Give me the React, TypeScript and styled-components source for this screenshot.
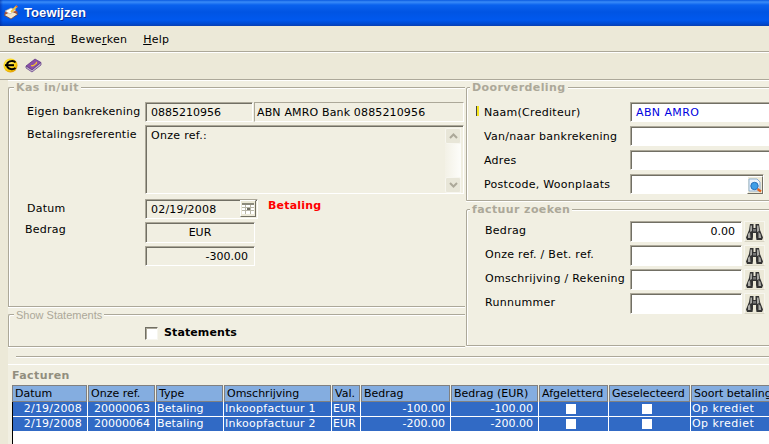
import React from "react";
import styled, { createGlobalStyle } from "styled-components";

const Global = createGlobalStyle`
  html, body { margin: 0; padding: 0; background: #f1efe2; }
  #root { width: 769px; height: 444px; overflow: hidden; }
`;

const Win = styled.div`
  width: 769px; height: 444px; overflow: hidden; display: flex; flex-direction: column;
  background: #ece9d8; color: #000;
  font: 11px/14px "DejaVu Sans", Verdana, sans-serif;
`;
const TitleBar = styled.div`
  height: 26px; flex: none; display: flex; align-items: center; gap: 5px; padding: 0 0 1px 3px; box-sizing: border-box;
  background: linear-gradient(90deg, rgba(0, 30, 140, .45) 0, rgba(0, 30, 140, 0) 3px),
    linear-gradient(180deg, #0a5ae0 0, #3a8cf8 2px, #0a62ee 5px, #0054e3 12px, #0058ee 20px, #0049cf 24px, #0a3fb0 26px);
`;
const TitleText = styled.span`
  color: #fff; font: bold 13px/16px "Liberation Sans", Arial, sans-serif; letter-spacing: 0.1px; text-shadow: 1px 1px 0 #0a2f9a;
`;
const MenuBar = styled.nav`
  height: 26px; flex: none; box-sizing: border-box; display: flex; align-items: center; gap: 16px; padding: 2px 0 0 8px;
  border-bottom: 1px solid #aca899; box-shadow: 0 1px 0 #fff;
`;
const MenuItem = styled.span`
  letter-spacing: 0.25px;
`;
const ToolBar = styled.div`
  height: 28px; flex: none; box-sizing: border-box; display: flex; gap: 7px; padding: 6px 0 0 3px;
  border-bottom: 1px solid #aca899;
`;
const Body = styled.div`
  flex: 1; min-height: 0; margin-left: 8px; background: #f1efe2; display: flex; flex-direction: column;
  box-shadow: inset 0 1px 0 #fff;
`;
const Upper = styled.div`
  display: flex; padding-top: 7px; flex: none;
`;
const LeftCol = styled.div`
  width: 458px; flex: none; display: flex; flex-direction: column; gap: 7px;
`;
const RightCol = styled.div`
  width: 320px; flex: none; display: flex; flex-direction: column; gap: 8px;
`;
const Panel = styled.section<{ $h: number; $open?: boolean }>`
  position: relative; box-sizing: border-box; height: ${p => p.$h}px;
  border: 1px solid #aca899; border-radius: 2px 0 0 0;
  ${p => p.$open ? "border-right: 0; margin-right: 1px;" : ""}
  box-shadow: inset 1px 1px 0 #fff, 0 1px 0 #fff;
`;
const Legend = styled.span<{ $plain?: boolean; $left?: number }>`
  position: absolute; left: ${p => p.$left ?? 5}px; top: -7px; padding: 0 2px; background: #f1efe2; color: #aca899;
  font: ${p => p.$plain ? `11px/14px "Liberation Sans", Arial, sans-serif` : `bold 11px/14px "DejaVu Sans", Verdana, sans-serif`};
  letter-spacing: ${p => p.$plain ? "0" : "0.4px"};
`;
const KasBody = styled.div`
  padding: 14px 0 0 18px; display: flex; flex-direction: column;
`;
const KasRow = styled.div<{ $top?: number }>`
  display: flex; align-items: flex-start; margin-top: ${p => p.$top ?? 0}px;
`;
const KasLabel = styled.label<{ $shift?: number; $down?: number }>`
  width: ${p => 118 - (p.$shift ?? 0)}px; flex: none; margin-left: ${p => p.$shift ?? 0}px; padding-top: ${p => p.$down ?? 3}px;
  box-sizing: border-box; white-space: nowrap; letter-spacing: 0.25px;
`;
const Field = styled.div<{ $w: number; $h?: number; $align?: string; $light?: boolean; $white?: boolean; $blue?: boolean; $gap?: number }>`
  box-sizing: border-box; flex: none; width: ${p => p.$w}px; height: ${p => p.$h ?? 20}px;
  margin-left: ${p => p.$gap ?? 0}px;
  border: 1px solid; border-color: #aca899 #fff #fff #aca899;
  box-shadow: ${p => p.$light ? "none" : "inset 1px 1px 0 #716f64"};
  background: ${p => p.$white ? "#fff" : "transparent"};
  color: ${p => p.$blue ? "#0000e0" : "#000"};
  letter-spacing: ${p => p.$blue ? "0.4px" : "0"};
  padding: 3px ${p => p.$align === "right" ? "6px" : "5px"} 0 ${p => p.$light ? "2px" : "5px"};
  text-align: ${p => p.$align ?? "left"}; white-space: nowrap;
`;
const WideText = styled.span`
  letter-spacing: 0.15px;
`;
const MemoText = styled.span`
  letter-spacing: 0.3px;
`;
const MemoField = styled(Field)`
  display: flex; justify-content: space-between; padding-right: 2px;
`;
const Scroll = styled.div`
  width: 16px; height: 65px; flex: none; margin-top: -1px; display: flex; flex-direction: column; justify-content: space-between;
  background: linear-gradient(90deg, #f3f1e6, #fdfdfa);
`;
const ScrollBtn = styled.div`
  height: 16px; display: flex; align-items: center; justify-content: center; box-sizing: border-box;
  background: #e8e6d8; border: 1px solid #f7f6ef; border-radius: 2px;
`;
const InlineBtn = styled.div`
  width: 16px; height: 17px; box-sizing: border-box; background: #ece9d8; display: flex; align-items: center; justify-content: center;
  border: 1px solid; border-color: #fff #716f64 #716f64 #fff;
`;
const DateField = styled(Field)`
  display: flex; justify-content: space-between; align-items: flex-start; padding-right: 1px; padding-top: 0;
`;
const DateText = styled.span`
  padding-top: 3px; letter-spacing: 0.2px;
`;
const Status = styled.span`
  color: #f00; font-weight: bold; margin-left: 10px; padding-top: 0; letter-spacing: 0.2px;
`;
const CheckRow = styled.div`
  display: flex; align-items: center; padding: 11px 0 0 136px; gap: 6px;
`;
const Check = styled.span`
  width: 13px; height: 13px; box-sizing: border-box; background: #fff; display: block;
  border: 1px solid; border-color: #716f64 #f7f6ef #f7f6ef #716f64; box-shadow: inset 1px 1px 0 #aca899;
`;
const Strong = styled.span`
  font-weight: bold; letter-spacing: 0.1px;
`;
const FormStack = styled.div<{ $top: number; $gap: number }>`
  padding-top: ${p => p.$top}px; display: flex; flex-direction: column; gap: ${p => p.$gap}px;
`;
const FormRow = styled.div`
  display: flex; align-items: flex-start;
`;
const MarkerSlot = styled.div<{ $w?: number }>`
  width: ${p => p.$w ?? 17}px; flex: none; padding-left: 9px; box-sizing: border-box;
`;
const Marker = styled.i`
  display: block; width: 2px; height: 10px; margin-top: 4px; background: #f5e51b; border-left: 1px solid #444;
`;
const RLabel = styled.label<{ $w: number; $down?: number }>`
  width: ${p => p.$w}px; flex: none; padding-top: ${p => p.$down ?? 3}px; white-space: nowrap; letter-spacing: 0.28px;
`;
const LookupField = styled(Field)`
  display: flex; justify-content: flex-end; padding: 1px 0 0 0;
`;
const GlassBtn = styled(InlineBtn)`
  width: 16px; height: 18px; background: #ece9d8;
`;
const FindBtn = styled.div`
  width: 21px; height: 21px; margin-left: 2px; flex: none; box-sizing: border-box; display: flex; align-items: center; justify-content: center;
  background: #ece9d8; border: 1px solid; border-color: #f7f6ef #f7f6ef #d8d5c4 #f7f6ef;
`;
const Divider = styled.hr`
  margin: 9px 0 0 8px; border: 0; height: 1px; background: #aca899; box-shadow: 0 1px 0 #fff; flex: none;
`;
const Section = styled.div`
  margin-top: 7px; border-top: 1px solid #fff; flex: 1; min-height: 0; padding: 3px 0 0 4px; display: flex; flex-direction: column;
`;
const SectionTitle = styled.div`
  color: #918e7e; font-weight: bold; height: 17px; padding-top: 1px; box-sizing: border-box; letter-spacing: 0.4px; flex: none;
`;
const HeadCols = "75px 67px 67px 107px 28px 89px 87px 69px 81px 100px";
const RowCols = "74px 67px 67px 107px 28px 89px 87px 69px 81px 100px";
const Head = styled.div`
  display: grid; grid-template-columns: ${HeadCols}; gap: 1px; height: 17px; flex: none;
`;
const HeadCell = styled.div`
  box-sizing: border-box; background: #84ade0; border: 1px solid #808080; padding: 1px 2px; white-space: nowrap; overflow: hidden;
  line-height: 14px;
`;
const Rows = styled.div`
  flex: 1; background: #fff; border-left: 1px solid #000; display: flex; flex-direction: column; gap: 1px;
`;
const DataRow = styled.div`
  display: grid; grid-template-columns: ${RowCols}; gap: 1px; height: 14px; flex: none;
`;
const Cell = styled.div<{ $align?: string; $track?: number }>`
  background: #316ac5; color: #fff; padding: 0 ${p => p.$align === "right" ? "5px" : "1px"} 0 1px;
  line-height: 14px; white-space: nowrap; overflow: hidden; display: flex; letter-spacing: ${p => p.$track ?? 0}px;
  justify-content: ${p => p.$align === "right" ? "flex-end" : "flex-start"};
`;
const TickCell = styled.div`
  background: #316ac5; display: flex; align-items: center; justify-content: center; padding-right: 5px;
`;
const Tick = styled.span`
  width: 10px; height: 10px; background: #fff; display: block;
`;

const AppIcon = () => (
  <svg width="16" height="16" viewBox="0 0 16 16">
    <path d="M1 8l7-4 7 3-7 5z" fill="#c9502a" />
    <path d="M1 10l7-4 7 3-7 5z" fill="#f3e7d0" stroke="#7a3a20" strokeWidth=".7" />
    <path d="M2 6l6-3 5 2-6 4z" fill="#fff" stroke="#a9a090" strokeWidth=".6" />
    <path d="M8 7l6-6" stroke="#f0c040" strokeWidth="2" />
    <path d="M13 1l1.5 1" stroke="#e05030" strokeWidth="1.4" />
  </svg>
);
const EuroIcon = () => (
  <svg width="15" height="15" viewBox="0 0 15 15">
    <defs>
      <radialGradient id="eu" cx=".4" cy=".35" r=".75">
        <stop offset="0" stopColor="#fff27a" />
        <stop offset=".6" stopColor="#fbd20c" />
        <stop offset="1" stopColor="#d98a00" />
      </radialGradient>
    </defs>
    <circle cx="7.5" cy="7.5" r="7" fill="url(#eu)" />
    <path d="M12.5 4.500C11 2.400 5.500 2.600 4.300 5.500c-1 2.400.2 5.200 3.500 5.600 2 .2 3.800-.3 4.700-1.300" fill="none" stroke="#000" strokeWidth="2" />
    <path d="M2 7.200h9" stroke="#000" strokeWidth="2" />
  </svg>
);
const BookIcon = () => (
  <svg width="17" height="15" viewBox="0 0 17 15">
    <path d="M1 8L10 1l6 3.5L7 12z" fill="#8a4fa8" stroke="#5a3080" strokeWidth=".7" />
    <path d="M1 8l6 4 9-7.500V7l-9 7-6-4z" fill="#c9bcd2" stroke="#5a3080" strokeWidth=".7" />
    <path d="M6 7.500c2 1 3-.5 4.500-1.500 1-.6 1.500-1.500.5-2" fill="none" stroke="#f0c030" strokeWidth="1.300" />
  </svg>
);
const Chevron = ({ up }: { up?: boolean }) => (
  <svg width="9" height="6" viewBox="0 0 9 6">
    <path d={up ? "M1 5l3.500-3.500L8 5" : "M1 1l3.500 3.500L8 1"} fill="none" stroke="#aca899" strokeWidth="2" />
  </svg>
);
const CalIcon = () => (
  <svg width="12" height="11" viewBox="0 0 12 11">
    <rect width="12" height="11" fill="#fff" />
    <rect width="12" height="2" fill="#8c8a7c" />
    <path d="M0 4.500h12M0 7.500h12M3.500 2v9M8.500 2v9" stroke="#b8b6a8" strokeWidth="1" />
    <rect x="5" y="5" width="3" height="2" fill="#716f64" />
  </svg>
);
const GlassIcon = () => (
  <svg width="14" height="15" viewBox="0 0 14 15">
    <path d="M1 1h8l3 3v9H1z" fill="#eef4fb" stroke="#8fb0d0" />
    <circle cx="6.500" cy="8" r="3.700" fill="#3f9fe8" stroke="#2a70b8" />
    <path d="M9.500 11l3.500 2.500" stroke="#e8641c" strokeWidth="2.200" />
  </svg>
);
const BinocIcon = () => (
  <svg width="17" height="16" viewBox="0 0 17 16">
    <path d="M4 0h3.500v4h2V0H13l1 6 3 7.500-1 2.500h-5.500L10 13V9H7v4l-.5 3H1l-1-2.500L3 6z" fill="#333" />
    <path d="M4.500 1.500H6v5.500l-2 1zM11 1.500h1.500l.8 5.500-2.300 1zM2 10l2-2 .5 6H2zM12.500 8l2 2 .7 4h-2.700z" fill="#aaaaa6" />
    <path d="M7 5h3v2.500H7z" fill="#777" />
  </svg>
);

const headers = ["Datum", "Onze ref.", "Type", "Omschrijving", "Val.", "Bedrag", "Bedrag (EUR)", "Afgeletterd", "Geselecteerd", "Soort betaling"];
const rows = [
  { d: "2/19/2008", r: "20000063", o: "Inkoopfactuur 1", b: "-100.00" },
  { d: "2/19/2008", r: "20000064", o: "Inkoopfactuur 2", b: "-200.00" },
];
const finders: [string, string][] = [
  ["Bedrag", "0.00"],
  ["Onze ref. / Bet. ref.", ""],
  ["Omschrijving / Rekening", ""],
  ["Runnummer", ""],
];

export default function App() {
  return (
    <Win>
      <Global />
      <TitleBar>
        <AppIcon />
        <TitleText>Toewijzen</TitleText>
      </TitleBar>
      <MenuBar>
        <MenuItem>Bestan<u>d</u></MenuItem>
        <MenuItem>Bewe<u>r</u>ken</MenuItem>
        <MenuItem><u>H</u>elp</MenuItem>
      </MenuBar>
      <ToolBar>
        <EuroIcon />
        <BookIcon />
      </ToolBar>
      <Body>
        <Upper>
          <LeftCol>
            <Panel $h={220} $open>
              <Legend>Kas in/uit</Legend>
              <KasBody>
                <KasRow>
                  <KasLabel>Eigen bankrekening</KasLabel>
                  <Field $w={108}>0885210956</Field>
                  <Field $w={210} $light $gap={1}><WideText>ABN AMRO Bank 0885210956</WideText></Field>
                </KasRow>
                <KasRow $top={3}>
                  <KasLabel>Betalingsreferentie</KasLabel>
                  <MemoField $w={319} $h={69}>
                    <MemoText>Onze ref.:</MemoText>
                    <Scroll>
                      <ScrollBtn><Chevron up /></ScrollBtn>
                      <ScrollBtn><Chevron /></ScrollBtn>
                    </Scroll>
                  </MemoField>
                </KasRow>
                <KasRow $top={5}>
                  <KasLabel>Datum</KasLabel>
                  <DateField $w={113}>
                    <DateText>02/19/2008</DateText>
                    <InlineBtn><CalIcon /></InlineBtn>
                  </DateField>
                  <Status>Betaling</Status>
                </KasRow>
                <KasRow $top={3}>
                  <KasLabel $shift={-2} $down={1}>Bedrag</KasLabel>
                  <Field $w={110} $h={21} $align="center">EUR</Field>
                </KasRow>
                <KasRow $top={3}>
                  <KasLabel />
                  <Field $w={110} $align="right">-300.00</Field>
                </KasRow>
              </KasBody>
            </Panel>
            <Panel $h={33} $open>
              <Legend $plain>Show Statements</Legend>
              <CheckRow>
                <Check />
                <Strong>Statements</Strong>
              </CheckRow>
            </Panel>
          </LeftCol>
          <RightCol>
            <Panel $h={114}>
              <Legend $left={3}>Doorverdeling</Legend>
              <FormStack $top={14} $gap={4}>
                <FormRow>
                  <MarkerSlot><Marker /></MarkerSlot>
                  <RLabel $w={146} $down={4}>Naam(Crediteur)</RLabel>
                  <Field $w={150} $white $blue>ABN AMRO</Field>
                </FormRow>
                <FormRow>
                  <MarkerSlot />
                  <RLabel $w={146} $down={4}>Van/naar bankrekening</RLabel>
                  <Field $w={150} $white />
                </FormRow>
                <FormRow>
                  <MarkerSlot />
                  <RLabel $w={146} $down={4}>Adres</RLabel>
                  <Field $w={150} $white />
                </FormRow>
                <FormRow>
                  <MarkerSlot />
                  <RLabel $w={146} $down={4}>Postcode, Woonplaats</RLabel>
                  <LookupField $w={134} $white>
                    <GlassBtn><GlassIcon /></GlassBtn>
                  </LookupField>
                </FormRow>
              </FormStack>
            </Panel>
            <Panel $h={137}>
              <Legend $left={3}>factuur zoeken</Legend>
              <FormStack $top={11} $gap={3}>
                {finders.map(([label, value]) => (
                  <FormRow key={label}>
                    <MarkerSlot $w={18} />
                    <RLabel $w={145}>{label}</RLabel>
                    <Field $w={112} $h={21} $white $align="right">{value}</Field>
                    <FindBtn><BinocIcon /></FindBtn>
                  </FormRow>
                ))}
              </FormStack>
            </Panel>
          </RightCol>
        </Upper>
        <Divider />
        <Section>
          <SectionTitle>Facturen</SectionTitle>
          <Head>
            {headers.map(h => <HeadCell key={h}>{h}</HeadCell>)}
          </Head>
          <Rows>
            {rows.map(r => (
              <DataRow key={r.r}>
                <Cell $align="right" $track={0.2}>{r.d}</Cell>
                <Cell $align="right">{r.r}</Cell>
                <Cell $track={0.15}>Betaling</Cell>
                <Cell $track={0.28}>{r.o}</Cell>
                <Cell>EUR</Cell>
                <Cell $align="right">{r.b}</Cell>
                <Cell $align="right">{r.b}</Cell>
                <TickCell><Tick /></TickCell>
                <TickCell><Tick /></TickCell>
                <Cell $track={0.45}>Op krediet</Cell>
              </DataRow>
            ))}
          </Rows>
        </Section>
      </Body>
    </Win>
  );
}
